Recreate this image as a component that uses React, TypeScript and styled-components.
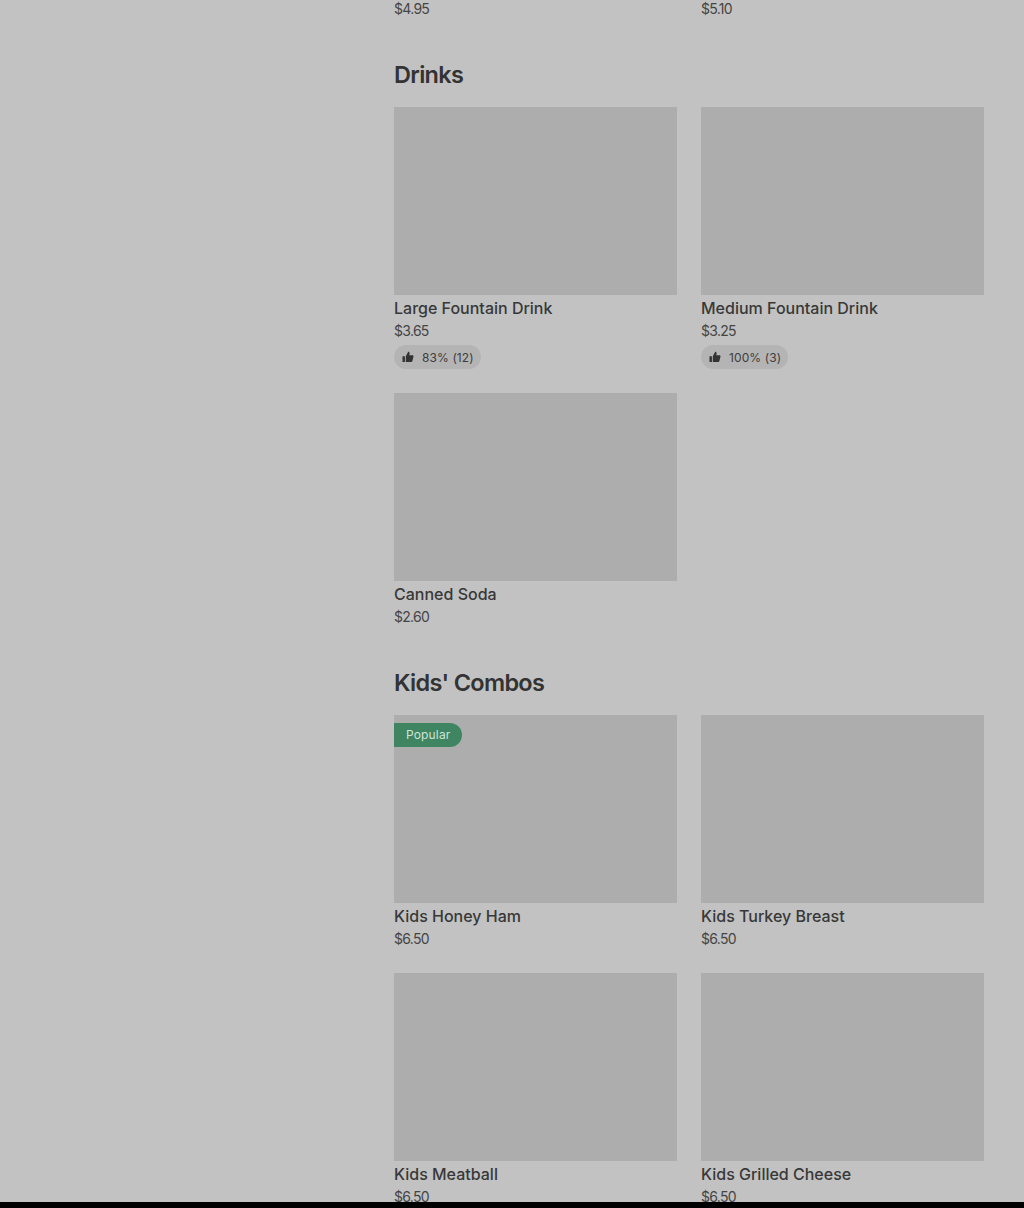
import React from 'react';
import styled, { createGlobalStyle } from 'styled-components';

const Global = createGlobalStyle`
  html, body { margin: 0; padding: 0; background: #c2c2c2; }
  body { font-family: "Inter", "Liberation Sans", sans-serif; color: #333; }
`;

const Viewport = styled.div`
  height: 1208px;
  display: flex;
  flex-direction: column;
  overflow: hidden;
  background: #c2c2c2;
`;

const Scroll = styled.main`
  flex: 1;
  min-height: 0;
  overflow: hidden;
  padding: 0 40px 0 394px;
`;

const BottomBar = styled.div`
  height: 6px;
  flex: none;
  background: #000;
`;

const Grid = styled.div`
  display: grid;
  grid-template-columns: 283px 283px;
  column-gap: 24px;
  row-gap: 24px;
`;

const Leftover = styled(Grid)`
  margin-top: -3px;
`;

const Section = styled.section`
  margin-top: 40px;
`;

const Heading = styled.h2`
  margin: 0 0 16px;
  font-size: 23.5px;
  line-height: 32px;
  font-weight: 600;
  letter-spacing: -0.7px;
  color: #333;
`;

const Card = styled.article`
  display: flex;
  flex-direction: column;
  min-width: 0;
  position: relative;
`;

const Thumb = styled.div`
  height: 188px;
  background: #adadad;
`;

const Badge = styled.span`
  position: absolute;
  left: 0;
  top: 8px;
  height: 23px;
  padding: 0 12px 1px;
  display: flex;
  align-items: center;
  background: #3f8561;
  color: #cfe3d8;
  font-size: 12px;
  letter-spacing: 0.15px;
  border-radius: 0 12px 12px 0;
`;

const Name = styled.div`
  margin-top: 2px;
  font-size: 16px;
  line-height: 22px;
  font-weight: 500;
  color: #383838;
`;

const Price = styled.div`
  font-size: 14px;
  line-height: 20px;
  margin-top: 2px;
  color: #454545;
  letter-spacing: -0.7px;
`;

const Rating = styled.div`
  align-self: flex-start;
  margin-top: 4px;
  height: 24px;
  padding: 0 7px 0 8px;
  display: flex;
  align-items: center;
  gap: 8px;
  background: #b4b4b4;
  border-radius: 12px;
  font-size: 12px;
  letter-spacing: 0.1px;
  color: #3d3d3d;
`;

const Thumbs = () => (
  <svg width="12" height="12" viewBox="0 0 12 12" fill="#333" aria-hidden="true">
    <path d="M0.5 5.2h2.4V11H0.5zM3.8 5.2 6.2 0.8c.9 0 1.5.7 1.4 1.6L7.3 4.2h3.2c.7 0 1.2.7 1 1.4l-1.2 4.6c-.1.5-.5.8-1 .8H3.8z" />
  </svg>
);

type Item = { name: string; price: string; rating?: string; popular?: boolean };

const Item = ({ name, price, rating, popular }: Item) => (
  <Card>
    <Thumb />
    {popular && <Badge>Popular</Badge>}
    <Name>{name}</Name>
    <Price>{price}</Price>
    {rating && (
      <Rating>
        <Thumbs />
        {rating}
      </Rating>
    )}
  </Card>
);

const drinks: Item[] = [
  { name: 'Large Fountain Drink', price: '$3.65', rating: '83% (12)' },
  { name: 'Medium Fountain Drink', price: '$3.25', rating: '100% (3)' },
  { name: 'Canned Soda', price: '$2.60' },
];

const kids: Item[] = [
  { name: 'Kids Honey Ham', price: '$6.50', popular: true },
  { name: 'Kids Turkey Breast', price: '$6.50' },
  { name: 'Kids Meatball', price: '$6.50' },
  { name: 'Kids Grilled Cheese', price: '$6.50' },
];

export default function App() {
  return (
    <Viewport>
      <Global />
      <Scroll>
        <Leftover>
          <Price>$4.95</Price>
          <Price>$5.10</Price>
        </Leftover>
        <Section>
          <Heading>Drinks</Heading>
          <Grid>
            {drinks.map((d) => <Item key={d.name} {...d} />)}
          </Grid>
        </Section>
        <Section>
          <Heading>Kids' Combos</Heading>
          <Grid>
            {kids.map((d) => <Item key={d.name} {...d} />)}
          </Grid>
        </Section>
      </Scroll>
      <BottomBar />
    </Viewport>
  );
}
